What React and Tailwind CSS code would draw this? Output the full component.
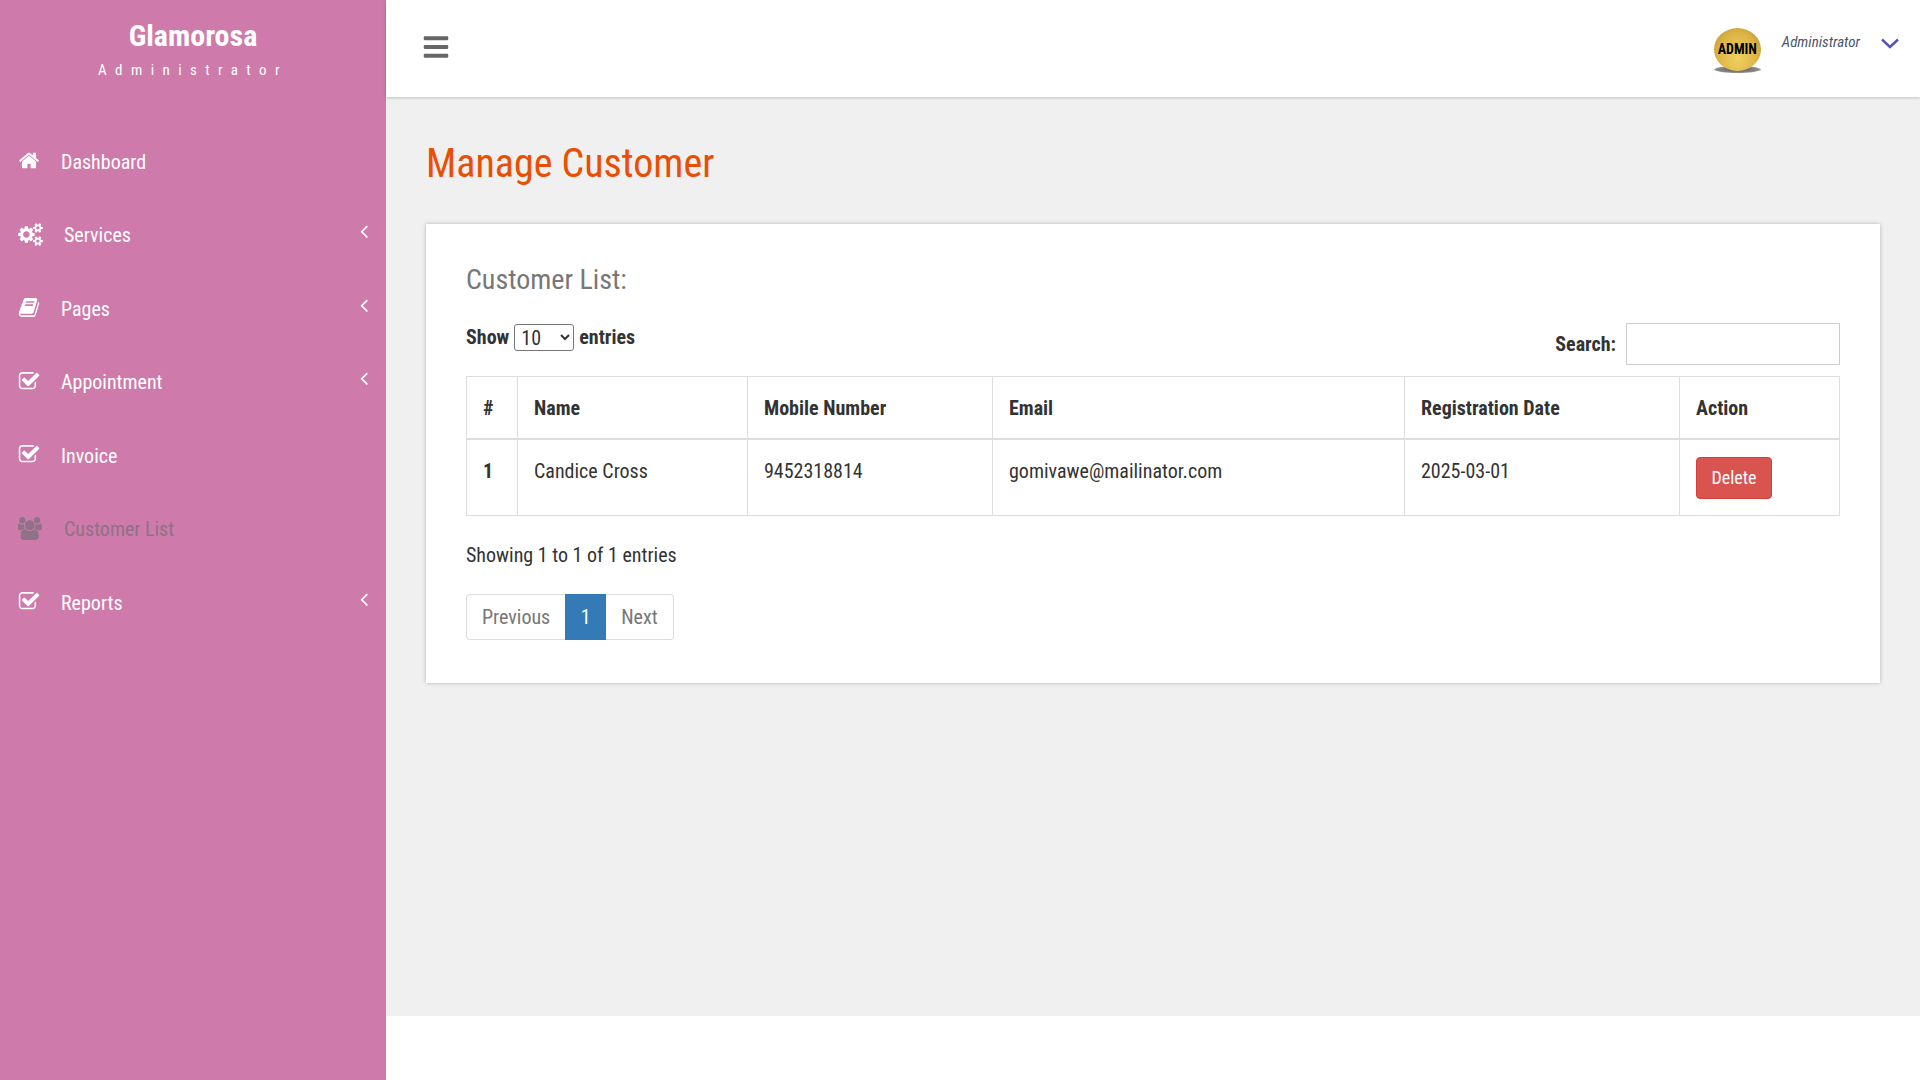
import React from "react";
import { FaBars } from "react-icons/fa";

// Font Awesome 4 shapes, the fa package only ships the newer ones
const HomeIcon = ({ className }) => (
  <svg className={className} viewBox="0 0 1792 1792" fill="currentColor">
    <path d="M1472 992v480q0 26-19 45t-45 19h-384v-384h-256v384h-384q-26 0-45-19t-19-45v-480q0-1 .5-3t.5-3l575-474 575 474q1 2 1 6zm223-69l-62 74q-8 9-21 11h-3q-13 0-21-7l-692-577-692 577q-12 8-24 7-13-2-21-11l-62-74q-8-10-7-23.5t11-21.5l719-599q32-26 76-26t76 26l244 204v-195q0-14 9-23t23-9h192q14 0 23 9t9 23v408l219 182q10 8 11 21.5t-7 23.5z" />
  </svg>
);

const CogsIcon = ({ className }) => (
  <svg className={className} viewBox="0 0 1920 1792" fill="currentColor">
    <path d="M896 896q0-106-75-181t-181-75-181 75-75 181 75 181 181 75 181-75 75-181zm768 512q0-52-38-90t-90-38-90 38-38 90q0 53 37.5 90.5t90.5 37.5 90.5-37.5 37.5-90.5zm0-1024q0-52-38-90t-90-38-90 38-38 90q0 53 37.5 90.5t90.5 37.5 90.5-37.5 37.5-90.5zm-384 421v185q0 10-7 19.5t-16 10.5l-155 24q-11 35-32 76 34 48 90 115 7 11 7 20 0 12-7 19-23 30-82.5 89.5t-78.5 59.5q-11 0-21-7l-115-90q-37 19-77 31-11 108-23 155-7 24-30 24h-186q-11 0-20-7.5t-10-17.5l-23-153q-34-10-75-31l-118 89q-7 7-20 7-11 0-21-8-144-133-144-160 0-9 7-19 10-14 41-53t47-61q-23-44-35-82l-152-24q-10-1-17-9.5t-7-19.5v-185q0-10 7-19.5t16-10.5l155-24q11-35 32-76-34-48-90-115-7-11-7-20 0-12 7-20 22-30 82-89t79-59q11 0 21 7l115 90q34-18 77-32 11-108 23-154 7-24 30-24h186q11 0 20 7.5t10 17.5l23 153q34 10 75 31l118-89q8-7 20-7 11 0 21 8 144 133 144 160 0 8-7 19-12 16-42 54t-45 60q23 48 34 82l152 23q10 2 17 10.5t7 19.5zm640 533v140q0 16-149 31-12 27-30 52 51 113 51 138 0 4-4 7-122 71-124 71-8 0-46-47t-52-68q-20 2-30 2t-30-2q-14 21-52 68t-46 47q-2 0-124-71-4-3-4-7 0-25 51-138-18-25-30-52-149-15-149-31v-140q0-16 149-31 13-29 30-52-51-113-51-138 0-4 4-7 4-2 35-20t59-34 30-16q8 0 46 46.5t52 67.5q20-2 30-2t30 2q51-71 92-112l6-2q4 0 124 70 4 3 4 7 0 25-51 138 17 23 30 52 149 15 149 31zm0-1024v140q0 16-149 31-12 27-30 52 51 113 51 138 0 4-4 7-122 71-124 71-8 0-46-47t-52-68q-20 2-30 2t-30-2q-14 21-52 68t-46 47q-2 0-124-71-4-3-4-7 0-25 51-138-18-25-30-52-149-15-149-31v-140q0-16 149-31 13-29 30-52-51-113-51-138 0-4 4-7 4-2 35-20t59-34 30-16q8 0 46 46.5t52 67.5q20-2 30-2t30 2q51-71 92-112l6-2q4 0 124 70 4 3 4 7 0 25-51 138 17 23 30 52 149 15 149 31z" />
  </svg>
);

const BookIcon = ({ className }) => (
  <svg className={className} viewBox="0 0 1792 1792" fill="currentColor">
    <path d="M1703 478q40 57 18 129l-275 906q-19 64-76.5 107.5t-122.5 43.5h-923q-77 0-148.5-53.5t-99.5-131.5q-24-67-2-127 0-4 3-27t4-37q1-8-3-21.5t-3-19.5q2-11 8-21t16.5-23.5 16.5-23.5q23-38 45-91.5t30-91.5q3-10 .5-30t-.5-28q3-11 17-28t17-23q21-36 42-92t25-90q1-9-2.5-32t.5-28q4-13 22-30.5t22-22.5q19-26 42.5-84.5t27.5-96.5q1-8-3-25.5t-2-26.5q2-8 9-18t18-23 17-21q8-12 16.5-30.5t15-35 16-36 19.5-32 26.5-23.5 36-11.5 47.5 5.5l-1 3q38-9 51-9h761q74 0 114 56t18 130l-274 906q-36 119-71.5 153.5t-128.5 34.5h-869q-27 0-38 15-11 16-1 43 24 70 144 70h923q29 0 56-15.5t35-41.5l300-987q7-22 5-57 38 15 59 43zm-1064 2q-4 13 2 22.5t20 9.5h608q13 0 25.5-9.5t16.5-22.5l21-64q4-13-2-22.5t-20-9.5h-608q-13 0-25.5 9.5t-16.5 22.5zm-83 256q-4 13 2 22.5t20 9.5h608q13 0 25.5-9.5t16.5-22.5l21-64q4-13-2-22.5t-20-9.5h-608q-13 0-25.5 9.5t-16.5 22.5z" />
  </svg>
);

const CheckIcon = ({ className }) => (
  <svg className={className} viewBox="0 0 1792 1792" fill="currentColor">
    <path d="M1472 930v318q0 119-84.5 203.5t-203.5 84.5h-832q-119 0-203.5-84.5t-84.5-203.5v-832q0-119 84.5-203.5t203.5-84.5h832q63 0 117 25 15 7 18 23 3 17-9 29l-49 49q-10 10-23 10-3 0-9-2-23-6-45-6h-832q-66 0-113 47t-47 113v832q0 66 47 113t113 47h832q66 0 113-47t47-113v-254q0-13 9-22l64-64q10-10 23-10 6 0 12 3 20 8 20 29zm231-489l-814 814q-24 24-57 24t-57-24l-430-430q-24-24-24-57t24-57l110-110q24-24 57-24t57 24l263 263 647-647q24-24 57-24t57 24l110 110q24 24 24 57t-24 57z" />
  </svg>
);

const UsersIcon = ({ className }) => (
  <svg className={className} viewBox="0 0 1920 1792" fill="currentColor">
    <path d="M529 896q-162 5-265 128h-134q-82 0-138-40.5t-56-118.5q0-353 124-353 6 0 43.5 21t97.5 42.5 119 21.5q67 0 133-23-5 37-5 66 0 139 81 256zm1071 637q0 120-73 189.5t-194 69.5h-874q-121 0-194-69.5t-73-189.5q0-53 3.5-103.5t14-109 26.5-108.5 43-97.5 62-81 85.5-53.5 111.5-20q10 0 43 21.5t73 48 107 48 135 21.5 135-21.5 107-48 73-48 43-21.5q61 0 111.5 20t85.5 53.5 62 81 43 97.5 26.5 108.5 14 109 3.5 103.5zm-1024-1277q0 106-75 181t-181 75-181-75-75-181 75-181 181-75 181 75 75 181zm704 384q0 159-112.5 271.5t-271.5 112.5-271.5-112.5-112.5-271.5 112.5-271.5 271.5-112.5 271.5 112.5 112.5 271.5zm576 225q0 78-56 118.5t-138 40.5h-134q-103-123-265-128 81-117 81-256 0-29-5-66 66 23 133 23 59 0 119-21.5t97.5-42.5 43.5-21q124 0 124 353zm-128-609q0 106-75 181t-181 75-181-75-75-181 75-181 181-75 181 75 75 181z" />
  </svg>
);

const AngleLeft = ({ className }) => (
  <svg className={className} viewBox="0 0 1792 1792" fill="currentColor">
    <path d="M1203 544q0 13-10 23l-393 393 393 393q10 10 10 23t-10 23l-50 50q-10 10-23 10t-23-10l-466-466q-10-10-10-23t10-23l466-466q10-10 23-10t23 10l50 50q10 10 10 23z" />
  </svg>
);

const menu = [
  { label: "Dashboard", icon: HomeIcon },
  { label: "Services", icon: CogsIcon, arrow: true, wide: true },
  { label: "Pages", icon: BookIcon, arrow: true },
  { label: "Appointment", icon: CheckIcon, arrow: true },
  { label: "Invoice", icon: CheckIcon },
  { label: "Customer List", icon: UsersIcon, wide: true, active: true },
  { label: "Reports", icon: CheckIcon, arrow: true },
];

const Sidebar = () => (
  <aside className="w-[386px] shrink-0 bg-[#ce7aaa] text-white">
    <div className="h-[125px] pt-[18px] text-center">
      <h1 className="text-[30px] leading-[36px] font-bold">Glamorosa</h1>
      <p className="mt-[7px] text-[15px] leading-[18px] tracking-[8.4px]">Administrator</p>
    </div>
    <ul>
      {menu.map((item) => (
        <li
          key={item.label}
          className={`flex h-[73.5px] items-center pl-[18px] pr-[11px] text-[20px] ${
            item.active ? "text-[#8d7288]" : "text-white"
          }`}
        >
          <item.icon
            className={`${
              item.wide ? "w-[25px] mr-[21px]" : "w-[22px] mr-[21px]"
            } h-[23px] shrink-0 -translate-y-[1px]`}
          />
          <span>{item.label}</span>
          {item.arrow && <AngleLeft className="ml-auto h-[22px] w-[22px] -translate-y-[4px]" />}
        </li>
      ))}
    </ul>
  </aside>
);

const Header = () => (
  <header className="relative z-10 flex h-[97px] shrink-0 items-center bg-white pl-[37px] pr-[21px] shadow-[0_1px_3px_rgba(0,0,0,0.2)]">
    <FaBars className="h-[28px] w-[26px] -translate-y-[2px] text-[#666666]" />
    <div className="ml-auto flex items-center">
      <div className="relative h-[44px] w-[47px] translate-y-[1px]">
        <div className="absolute -bottom-[1px] left-0 h-[7px] w-[47px] rounded-[50%] bg-[radial-gradient(ellipse,#555555_0%,#888888_60%,transparent_100%)]" />
        <div className="absolute left-0 top-0 flex h-[43px] w-[47px] items-center justify-center rounded-[50%] bg-[radial-gradient(ellipse_at_50%_70%,#f0d060_0%,#dcb445_60%,#b08a30_100%)]">
          <span className="text-[14px] font-bold text-black">ADMIN</span>
        </div>
      </div>
      <span className="ml-[21px] -translate-y-[6px] text-[15px] text-[#4f5468] italic">Administrator</span>
      <svg className="ml-[21px] -translate-y-[5px]" width="18" height="11" viewBox="0 0 18 11" fill="none">
        <path d="M1 1.5 L9 9 L17 1.5" stroke="#5454b8" strokeWidth="2.4" />
      </svg>
    </div>
  </header>
);

const CustomerTable = () => (
  <table className="w-[1373px] table-fixed border-collapse text-left text-[20px] text-[#333333]">
    <colgroup>
      <col className="w-[51px]" />
      <col className="w-[230px]" />
      <col className="w-[245px]" />
      <col className="w-[412px]" />
      <col className="w-[275px]" />
      <col className="w-[160px]" />
    </colgroup>
    <thead>
      <tr className="h-[62px] font-bold">
        {["#", "Name", "Mobile Number", "Email", "Registration Date", "Action"].map((h) => (
          <th key={h} className="border border-b-2 border-[#dddddd] pl-[16px] pt-[2px] align-middle">
            {h}
          </th>
        ))}
      </tr>
    </thead>
    <tbody>
      <tr className="h-[77px] align-top">
        <td className="border border-[#dddddd] pl-[16px] pt-[16px] font-bold">1</td>
        <td className="border border-[#dddddd] pl-[16px] pt-[16px]">Candice Cross</td>
        <td className="border border-[#dddddd] pl-[16px] pt-[16px]">9452318814</td>
        <td className="border border-[#dddddd] pl-[16px] pt-[16px]">gomivawe@mailinator.com</td>
        <td className="border border-[#dddddd] pl-[16px] pt-[16px]">2025-03-01</td>
        <td className="border border-[#dddddd] pl-[16px] pt-[17px]">
          <button className="h-[42px] w-[76px] rounded-[4px] border border-[#d43f3a] bg-[#d9534f] text-[18px] text-white">
            Delete
          </button>
        </td>
      </tr>
    </tbody>
  </table>
);

const App = () => {
  return (
    <div className="flex h-screen overflow-hidden bg-white font-['Roboto',sans-serif] [font-stretch:75%]">
      <Sidebar />
      <div className="flex min-w-0 flex-1 flex-col">
        <Header />
        <main className="h-[919px] bg-[#f0f0f0] pl-[40px] pr-[40px] pt-[41px]">
          <h2 className="text-[40px] leading-[52px] text-[#e94e02]">Manage Customer</h2>
          <section className="mt-[34px] h-[459px] w-[1454px] bg-white p-[40px] shadow-[0_0_4px_rgba(0,0,0,0.25)]">
            <h3 className="text-[28px] leading-[32px] text-[#777777]">Customer List:</h3>
            <div className="mt-[27px] flex h-[53px] items-start justify-between text-[20px] font-bold text-[#333333]">
              <label className="flex -translate-y-[1px] items-center gap-[5px]">
                Show
                <select className="h-[27px] w-[60px] rounded-[3px] border border-[#767676] bg-white px-[2px] text-[20px] font-normal">
                  <option>10</option>
                </select>
                entries
              </label>
              <label className="flex items-center gap-[10px]">
                Search:
                <input className="h-[42px] w-[214px] border border-[#cccccc] bg-white" />
              </label>
            </div>
            <CustomerTable />
            <p className="mt-[27px] text-[20px] leading-[24px] text-[#333333]">Showing 1 to 1 of 1 entries</p>
            <nav className="mt-[27px] flex h-[46px] w-fit text-[20px]">
              <span className="flex items-center rounded-l-[4px] border border-r-0 border-[#dddddd] px-[15px] text-[#777777]">Previous</span>
              <span className="flex w-[41px] items-center justify-center bg-[#337ab7] text-white">1</span>
              <span className="flex items-center rounded-r-[4px] border border-l-0 border-[#dddddd] px-[15px] text-[#777777]">Next</span>
            </nav>
          </section>
        </main>
        <div className="flex-1 bg-white" />
      </div>
    </div>
  );
};

export default App;
